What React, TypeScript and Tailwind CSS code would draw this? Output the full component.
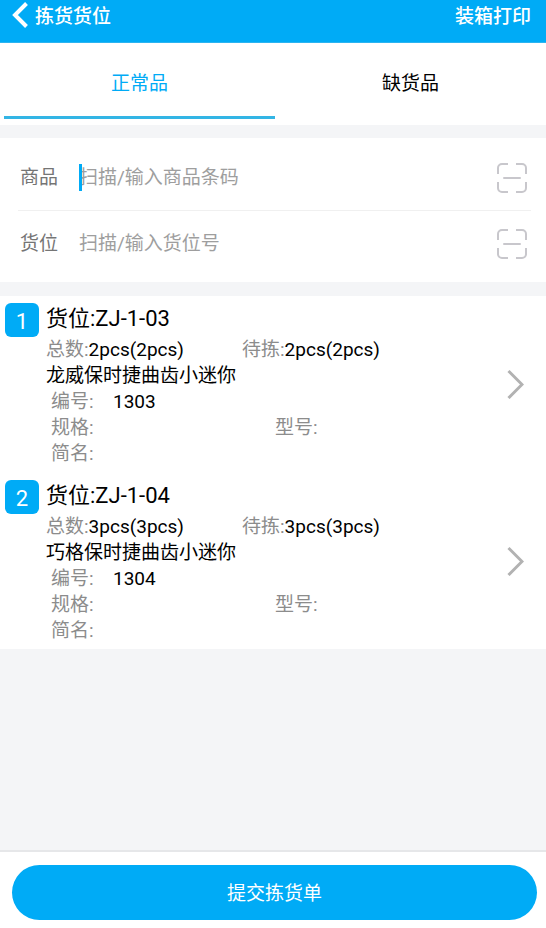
import { useState } from "react";

type PickItem = {
  id: number;
  location: string;
  total: string;
  pending: string;
  name: string;
  code: string;
};

const items: PickItem[] = [
  { id: 1, location: "ZJ-1-03", total: "2pcs(2pcs)", pending: "2pcs(2pcs)", name: "龙威保时捷曲齿小迷你", code: "1303" },
  { id: 2, location: "ZJ-1-04", total: "3pcs(3pcs)", pending: "3pcs(3pcs)", name: "巧格保时捷曲齿小迷你", code: "1304" },
];

function ScanIcon() {
  return (
    <svg viewBox="0 0 30 30" className="size-[30px]" fill="none" stroke="#c8c7cc" strokeWidth="2" aria-hidden="true">
      <path d="M1 11V5a4 4 0 0 1 4-4h6M19 1h6a4 4 0 0 1 4 4v6M29 19v6a4 4 0 0 1-4 4h-6M11 29H5a4 4 0 0 1-4-4v-6" />
      <path d="M7 15h16" strokeLinecap="round" />
    </svg>
  );
}

function Header() {
  return (
    <header className="flex h-[43px] items-start justify-between border-b border-[#2cb4f0] bg-[#00abf6] pr-[15px] pl-3 text-white">
      <button type="button" className="flex items-start gap-[7px] pt-[2px] font-medium leading-[30px]">
        <svg viewBox="0 0 16 26" className="h-[26px] w-4" fill="none" stroke="currentColor" strokeWidth="4" aria-hidden="true">
          <path d="M14.5 1.5 3 13l11.5 11.5" />
        </svg>
        拣货货位
      </button>
      <button type="button" className="pt-[2px] font-medium leading-[30px]">
        装箱打印
      </button>
    </header>
  );
}

function Tabs({ active, onChange }: { active: number; onChange: (index: number) => void }) {
  return (
    <nav className="flex h-[82px] bg-white pb-[6px] pl-1" role="tablist">
      {["正常品", "缺货品"].map((label, index) => (
        <button
          key={label}
          type="button"
          role="tab"
          aria-selected={active === index}
          onClick={() => onChange(index)}
          className={
            active === index
              ? "flex-1 border-b-[3px] border-[#33b5e5] pt-[10px] text-[#00abf6]"
              : "flex-1 border-b-[3px] border-transparent pt-[10px] text-black"
          }
        >
          {label}
        </button>
      ))}
    </nav>
  );
}

function ScanField({ id, label, placeholder, caret }: { id: string; label: string; placeholder: string; caret?: boolean }) {
  return (
    <div className="flex h-[65px] items-center pl-[2px]">
      <label htmlFor={id} className="w-[59px] pt-[2px] text-[#757575]">
        {label}
      </label>
      <div className="relative flex-1">
        <input
          id={id}
          type="text"
          placeholder={placeholder}
          className="block h-10 w-full bg-transparent text-[#333333] caret-[#00abf6] outline-none placeholder:text-[#9e9e9e]"
        />
        {caret && <span className="absolute top-[6px] left-0 h-[27px] w-[3px] bg-[#00abf6]" />}
      </div>
      <button type="button" aria-label="扫描" className="mr-1">
        <ScanIcon />
      </button>
    </div>
  );
}

function PickRow({ item }: { item: PickItem }) {
  return (
    <li className="flex items-start bg-white pt-[5px] pr-[22px] pb-[5px] pl-[5px]">
      <span className="mt-[2px] flex size-[34px] items-center justify-center rounded-md bg-[#00abf6] pt-[2px] text-[22px] text-white">
        {item.id}
      </span>
      <div className="ml-[7px] flex-1 leading-[26px] text-[#8c8c8c]">
        <h2 className="text-[22px] leading-9 text-black">货位:{item.location}</h2>
        <div className="flex">
          <p className="w-[196px]">
            总数:<span className="text-black">{item.total}</span>
          </p>
          <p>
            待拣:<span className="text-black">{item.pending}</span>
          </p>
        </div>
        <p className="text-black">{item.name}</p>
        <div className="pl-[5px]">
          <p className="flex">
            <span className="w-[62px]">编号:</span>
            <span className="text-black">{item.code}</span>
          </p>
          <div className="flex">
            <p className="w-[224px]">规格:</p>
            <p>型号:</p>
          </div>
          <p>简名:</p>
        </div>
      </div>
      <button type="button" aria-label="查看详情" className="self-center">
        <svg viewBox="0 0 17 30" className="h-[30px] w-[17px]" fill="none" stroke="#b2b2b2" strokeWidth="3" aria-hidden="true">
          <path d="M1.5 2 15 15.5 1.5 29" />
        </svg>
      </button>
    </li>
  );
}

export default function App() {
  const [tab, setTab] = useState(0);
  return (
    <div className="flex min-h-screen flex-col bg-[#f4f5f7] font-['Roboto','Noto_Sans_CJK_SC',sans-serif] text-[19px]">
      <Header />
      <Tabs active={tab} onChange={setTab} />
      <form className="mt-[13px] bg-white pt-[7px] pr-[15px] pb-[6px] pl-[18px]">
        <ScanField id="goods" label="商品" placeholder="扫描/输入商品条码" caret />
        <hr className="border-[#f0f0f0]" />
        <ScanField id="slot" label="货位" placeholder="扫描/输入货位号" />
      </form>
      <ul className="mt-[14px] flex flex-col gap-px bg-white">
        {items.map((item) => (
          <PickRow key={item.id} item={item} />
        ))}
      </ul>
      <footer className="mt-auto border-t-2 border-[#e6e7e9] bg-white pt-[13px] pr-[9px] pb-2 pl-3">
        <button type="button" className="h-[55px] w-full rounded-full bg-[#00abf6] pt-1 text-white">
          提交拣货单
        </button>
      </footer>
    </div>
  );
}
